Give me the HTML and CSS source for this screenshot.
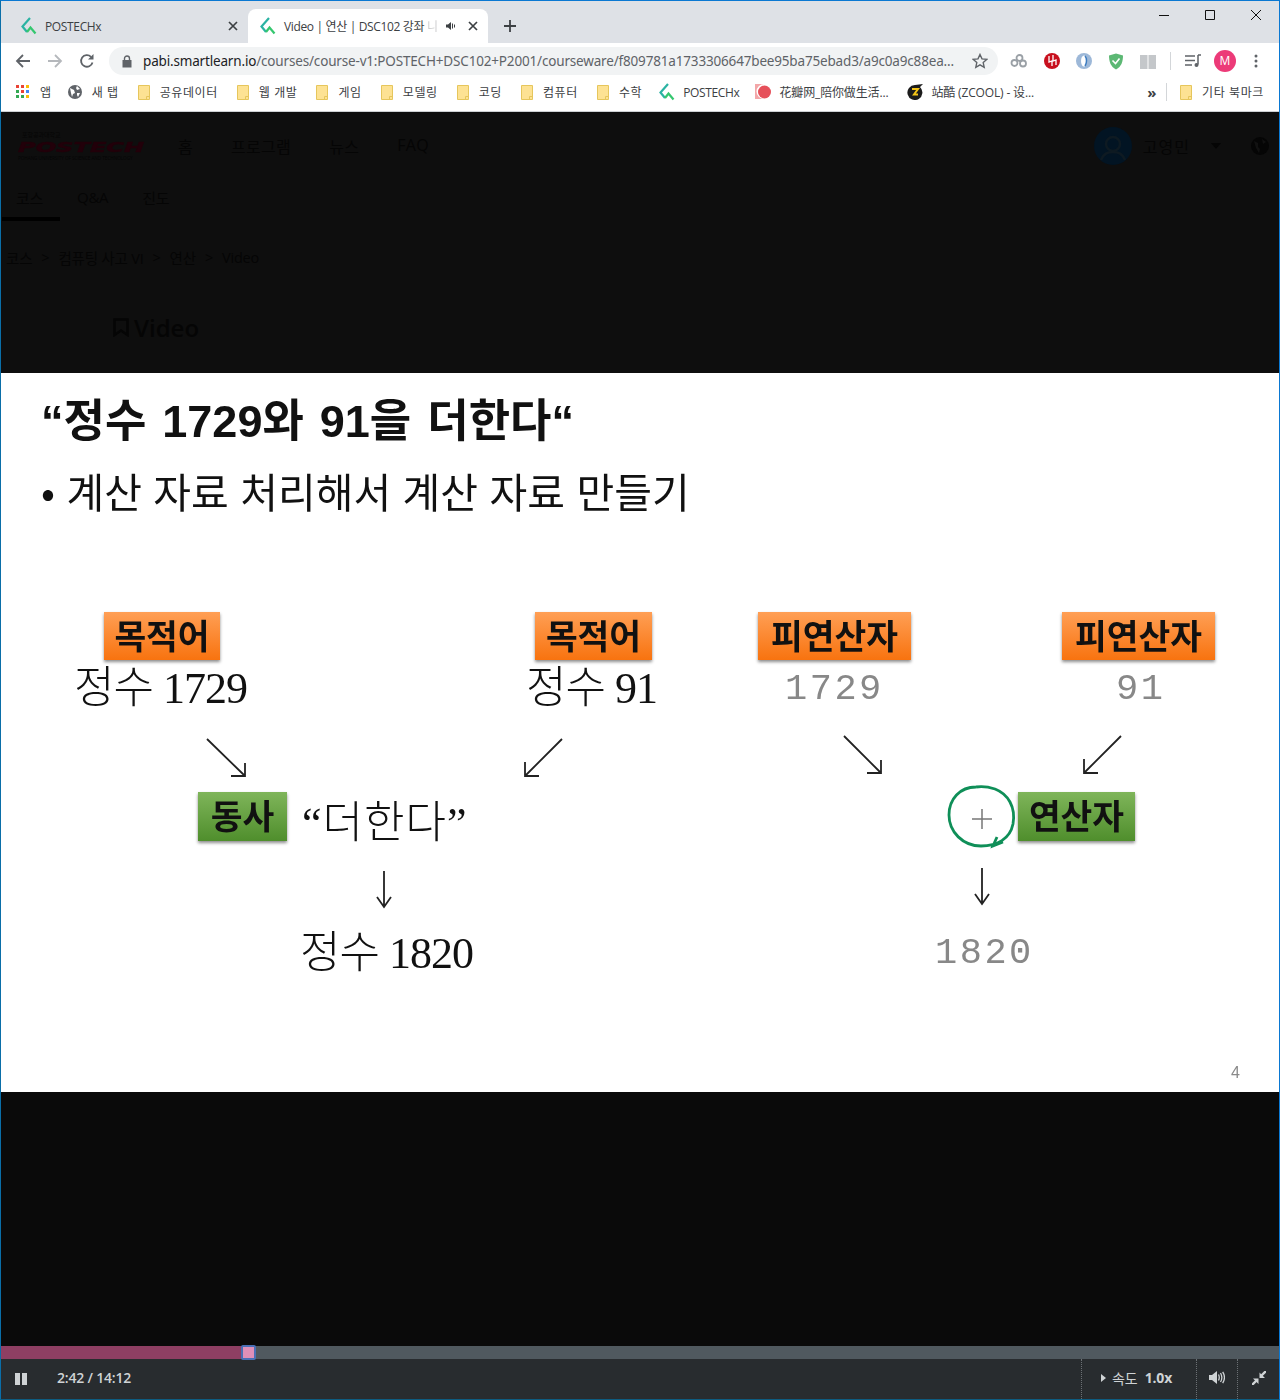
FILE: index.html
```html
<!DOCTYPE html>
<html lang="ko">
<head>
<meta charset="UTF-8">
<title>Video | 연산 | DSC102 강좌</title>
<link rel="stylesheet" href="styles.css">
</head>
<body>
<svg class="defs" width="0" height="0">
	<symbol id="fav" viewBox="0 0 16 18">
		<path d="M9 1 1.5 9.5 6 15" fill="none" stroke="#2bb3a3" stroke-width="2.2"/>
		<path d="M6 15 9.5 10.5 14.5 16.5" fill="none" stroke="#35c76f" stroke-width="2.2"/>
	</symbol>
	<symbol id="folder" viewBox="0 0 12 15">
		<path d="M.5.5h11v14H.5z" fill="#fde293" stroke="#e6c65c"/>
		<path d="M8.5 14.500v-3h3" fill="none" stroke="#e6c65c"/>
	</symbol>
</svg>

<div class="window">
	<div class="tabstrip">
		<div class="tab">
			<svg class="fav" width="16" height="18"><use href="#fav"/></svg>
			<span class="tab-title">POSTECHx</span>
			<svg class="tab-x" width="10" height="10" viewBox="0 0 10 10"><path d="M1 1l8 8M9 1l-8 8" stroke="#3c4043" stroke-width="1.700"/></svg>
		</div>
		<div class="tab tab-on">
			<svg class="fav" width="16" height="18"><use href="#fav"/></svg>
			<span class="tab-title">Video | 연산 | DSC102 강좌 <span class="tab-fade">니</span></span>
			<svg class="tab-snd" width="10" height="10" viewBox="0 0 10 10"><path d="M0 3.500h2L5 1v8L2 6.500H0z" fill="#3c4043"/><path d="M6.500 2.500v5M8.500 3.500v3" stroke="#3c4043"/></svg>
			<svg class="tab-x" width="10" height="10" viewBox="0 0 10 10"><path d="M1 1l8 8M9 1l-8 8" stroke="#3c4043" stroke-width="1.700"/></svg>
		</div>
		<svg class="newtab" width="12" height="12" viewBox="0 0 12 12"><path d="M6 0v12M0 6h12" stroke="#3c4043" stroke-width="1.800"/></svg>
		<div class="winbtns">
			<svg width="10" height="10" viewBox="0 0 10 10"><path d="M0 5.500h10" stroke="#111"/></svg>
			<svg width="10" height="10" viewBox="0 0 10 10"><path d="M.5.5h9v9h-9z" fill="none" stroke="#111"/></svg>
			<svg width="10" height="10" viewBox="0 0 10 10"><path d="M0 0l10 10M10 0L0 10" stroke="#111"/></svg>
		</div>
	</div>

	<div class="toolbar">
		<svg class="nav-ico" width="16" height="16" viewBox="0 0 16 16"><path d="M15 8H2M8 2 2 8l6 6" fill="none" stroke="#5f6368" stroke-width="1.800"/></svg>
		<svg class="nav-ico" width="16" height="16" viewBox="0 0 16 16"><path d="M1 8h13M8 2l6 6-6 6" fill="none" stroke="#b5b8bc" stroke-width="1.800"/></svg>
		<svg class="nav-ico" width="16" height="16" viewBox="0 0 16 16"><path d="M13.500 9.500A5.800 5.800 0 1 1 12 3.800" fill="none" stroke="#5f6368" stroke-width="1.800"/><path d="M14.500 1v5.500H9z" fill="#5f6368"/></svg>
		<div class="omnibox">
			<svg width="10" height="13" viewBox="0 0 10 13"><path d="M2.500 5V3.500a2.500 2.500 0 0 1 5 0V5" fill="none" stroke="#5f6368" stroke-width="1.400"/><path d="M.5 5h9v7.500h-9z" fill="#5f6368"/></svg>
			<span class="url"><b>pabi.smartlearn.io</b>/courses/course-v1:POSTECH+DSC102+P2001/courseware/f809781a1733306647bee95ba75ebad3/a9c0a9c88ea...</span>
			<svg width="16" height="16" viewBox="0 0 16 16"><path d="M8 1.500l2 4.400 4.700.5-3.500 3.200 1 4.700L8 11.900l-4.200 2.400 1-4.700L1.300 6.400 6 5.900z" fill="none" stroke="#5f6368" stroke-width="1.400"/></svg>
		</div>
		<div class="exts">
			<svg width="18" height="16" viewBox="0 0 18 16"><g fill="none" stroke="#9aa0a6" stroke-width="1.800"><circle cx="4.500" cy="10" r="3"/><circle cx="13" cy="10.500" r="3"/><circle cx="9.500" cy="5" r="3"/></g></svg>
			<svg width="16" height="16" viewBox="0 0 16 16"><circle cx="8" cy="8" r="8" fill="#c8101e"/><path d="M5 3v6l3-1v5M9 2v6l3-1v5" fill="none" stroke="#fff" stroke-width="1.300"/></svg>
			<svg width="16" height="16" viewBox="0 0 16 16"><circle cx="8" cy="8" r="8" fill="#9db8d8"/><ellipse cx="8" cy="8" rx="3" ry="5.500" fill="#fff"/><path d="M9 3c2 2 2 7 0 10" fill="none" stroke="#3d7cc0" stroke-width="1.500"/></svg>
			<svg width="16" height="17" viewBox="0 0 16 17"><path d="M1 2.500 8 .5l7 2c0 6-1.500 11-7 14-5.500-3-7-8-7-14z" fill="#5cb874"/><path d="M4.500 7.500 7.500 10.500 11.500 5.500" fill="none" stroke="#fff" stroke-width="1.600"/></svg>
			<svg width="16" height="15" viewBox="0 0 16 15"><path d="M0 1h7.500v14H0zM8.500 1H16v14H8.500z" fill="#c4c7ca"/></svg>
			<i class="ext-sep"></i>
			<svg class="ext-list" width="16" height="14" viewBox="0 0 16 14"><path d="M0 2h10M0 6.500h10M0 11h7" stroke="#5f6368" stroke-width="1.500"/><path d="M13 1h3M13 1v9.500" stroke="#5f6368" stroke-width="1.500" fill="none"/><circle cx="11.500" cy="11" r="2" fill="#5f6368"/></svg>
			<span class="avatar">M</span>
			<svg width="4" height="14" viewBox="0 0 4 14"><circle cx="2" cy="2" r="1.500" fill="#5f6368"/><circle cx="2" cy="7" r="1.500" fill="#5f6368"/><circle cx="2" cy="12" r="1.500" fill="#5f6368"/></svg>
		</div>
	</div>

	<div class="bookmarks">
		<span class="bm bm-apps">
			<svg width="14" height="14" viewBox="0 0 14 14">
				<g fill="#ea4335"><path d="M0 0h3v3H0zM5 0h3v3H5z"/></g><path d="M10 0h3v3h-3z" fill="#fbbc04"/>
				<path d="M0 5h3v3H0z" fill="#34a853"/><path d="M5 5h3v3H5z" fill="#ea4335"/><path d="M10 5h3v3h-3z" fill="#4285f4"/>
				<path d="M0 10h3v3H0zM5 10h3v3H5z" fill="#34a853"/><path d="M10 10h3v3h-3z" fill="#fbbc04"/>
			</svg>앱</span>
		<span class="bm">
			<svg width="14" height="14" viewBox="0 0 14 14"><circle cx="7" cy="7" r="7" fill="#5f6368"/><path d="M2 3l4 2 1 3-2 1-1 3-1-4zM9 1l3 3-3 1-1-2zM9 8l3 0-2 4-1-2z" fill="#fff"/></svg>새 탭</span>
		<span class="bm"><svg class="fd" width="12" height="15"><use href="#folder"/></svg>공유데이터</span>
		<span class="bm"><svg class="fd" width="12" height="15"><use href="#folder"/></svg>웹 개발</span>
		<span class="bm"><svg class="fd" width="12" height="15"><use href="#folder"/></svg>게임</span>
		<span class="bm"><svg class="fd" width="12" height="15"><use href="#folder"/></svg>모델링</span>
		<span class="bm"><svg class="fd" width="12" height="15"><use href="#folder"/></svg>코딩</span>
		<span class="bm"><svg class="fd" width="12" height="15"><use href="#folder"/></svg>컴퓨터</span>
		<span class="bm"><svg class="fd" width="12" height="15"><use href="#folder"/></svg>수학</span>
		<span class="bm bm-latin"><svg width="16" height="18"><use href="#fav"/></svg>POSTECHx</span>
		<span class="bm bm-latin2 bm-hua"><svg width="16" height="16" viewBox="0 0 16 16"><path d="M0 0h9a7.500 7.500 0 0 0 0 15H0z" fill="#f3a6a8"/><circle cx="9.500" cy="8" r="6.500" fill="#e6505a"/></svg>花瓣网_陪你做生活...</span>
		<span class="bm bm-latin2"><svg width="16" height="16" viewBox="0 0 16 16"><path d="M16 0 13 3A7.500 7.500 0 1 1 8 1z" fill="#1c1c1c"/><path d="M5 5h6L7 10.500h4" fill="none" stroke="#f5c518" stroke-width="2"/></svg>站酷 (ZCOOL) - 设...</span>
		<span class="bm-more">»</span>
		<i class="bm-sep"></i>
		<span class="bm"><svg class="fd" width="12" height="15"><use href="#folder"/></svg>기타 북마크</span>
	</div>

	<div class="page">
		<div class="behind">
			<div class="site-head">
				<div class="logo">
					<span class="logo-top">포항공과대학교</span>
					<span class="logo-main">POSTECH</span>
					<span class="logo-sub">POHANG UNIVERSITY OF SCIENCE AND TECHNOLOGY</span>
				</div>
				<nav class="site-nav"><span>홈</span><span>프로그램</span><span>뉴스</span><span>FAQ</span></nav>
				<div class="user">
					<svg width="38" height="38" viewBox="0 0 38 38"><circle cx="19" cy="19" r="19" fill="#021423"/><circle cx="19" cy="17" r="7" fill="none" stroke="#0e1a22" stroke-width="2.500"/><path d="M7 33c3-7 7-8 12-8s9 1 12 8" fill="none" stroke="#0e1a22" stroke-width="2.500"/></svg>
					<span class="user-name">고영민</span>
					<i class="user-caret"></i>
					<svg class="user-globe" width="18" height="18" viewBox="0 0 18 18"><circle cx="9" cy="9" r="9" fill="#050505"/><path d="M3 4l4 2v4l2 2-1 4-3-5zM11 2l4 3-3 2z" fill="#111"/></svg>
				</div>
			</div>
			<div class="course-tabs"><span class="ct-on">코스</span><span>Q&amp;A</span><span>진도</span></div>
			<div class="crumbs"><span>코스</span><i>&gt;</i><span>컴퓨팅 사고 VI</span><i>&gt;</i><span>연산</span><i>&gt;</i><span>Video</span></div>
			<div class="unit-title">
				<svg width="16" height="19" viewBox="0 0 16 19"><path d="M1.500 1.500h13v15.500L8 12.500 1.500 17z" fill="none" stroke="#050505" stroke-width="2.500"/></svg>
				<span>Video</span>
			</div>
		</div>

		<div class="slide">
			<h1 class="s-title">“정수 1729와 91을 더한다“</h1>
			<p class="s-bullet">• 계산 자료 처리해서 계산 자료 만들기</p>

			<span class="tag orange t1">목적어</span>
			<span class="tag orange t2">목적어</span>
			<span class="tag orange t3">피연산자</span>
			<span class="tag orange t4">피연산자</span>
			<span class="tag green t5">동사</span>
			<span class="tag green t6">연산자</span>

			<span class="serif v1">정수 1729</span>
			<span class="serif v2">정수 91</span>
			<span class="serif v3">“더한다”</span>
			<span class="serif v4">정수 1820</span>

			<span class="mono m1">1729</span>
			<span class="mono m2">91</span>
			<span class="mono m3">1820</span>

			<svg class="marks" width="1278" height="719" viewBox="0 0 1278 719">
				<g fill="none" stroke="#222" stroke-width="1.800">
					<path d="M206 366l38 37M244 390v13h-14"/>
					<path d="M561 366l-37 37M524 389v14h14"/>
					<path d="M843 363l37 37M880 387v13h-14"/>
					<path d="M1120 363l-37 37M1083 386v14h14"/>
					<path d="M383 498v36M376 524l7 10 7-10"/>
					<path d="M981 495v36M974 521l7 10 7-10"/>
				</g>
				<path d="M971 446h20M981 436v20" stroke="#777" stroke-width="1.500"/>
				<path d="M975 414c-16 0-27 12-27 28 0 17 14 31 32 31 16 0 29-7 32-22 3-17-5-30-18-35-6-2-13-3-19-2M996 464l-4 9 10-4" fill="none" stroke="#0f8f58" stroke-width="2.800"/>
			</svg>

			<span class="pageno">4</span>
		</div>

		<div class="letterbox"></div>

		<div class="progress">
			<div class="progress-fill"></div>
			<i class="progress-knob"></i>
		</div>

		<div class="controls">
			<span class="pause"><i></i><i></i></span>
			<span class="time">2:42 / 14:12</span>
			<div class="ctl ctl-speed">
				<i class="speed-arrow"></i>
				<span class="speed-lbl">속도</span>
				<b class="speed-val">1.0x</b>
			</div>
			<div class="ctl ctl-vol">
				<svg width="16" height="13" viewBox="0 0 16 13"><path d="M0 4h3l5-4v13L3 9H0z" fill="#cfd3d5"/><path d="M9.500 3.500c1 2 1 4 0 6M11.500 2c1.800 3 1.800 6 0 9M13.700 .8c2.300 3.700 2.300 7.700 0 11.400" fill="none" stroke="#cfd3d5" stroke-width="1.300"/></svg>
			</div>
			<div class="ctl ctl-full">
				<svg width="14" height="14" viewBox="0 0 14 14"><path d="M14 0 9 5M0 14l5-5" stroke="#cfd3d5" stroke-width="2.400"/><path d="M7.500 1.500v5.500H13zM1 7.500h5.500V13z" fill="#cfd3d5"/></svg>
			</div>
		</div>
	</div>
</div>
</body>
</html>
```
FILE: styles.css
```css
*{
	margin:0; padding:0;
	box-sizing:border-box;
}

html,body{
	height:100%;
}

body{
	font-family:"Open Sans","Noto Sans CJK KR",sans-serif;
	overflow:hidden;
}

.defs{
	position:absolute;
}

.window{
	height:1400px;
	display:flex;
	flex-direction:column;
	border-top:1px solid #0a78d2;
	border-left:1px solid #0a6ea8;
	border-right:1px solid #0a78d2;
	border-bottom:1px solid #0d5c80;
	background:#fff;
}

/* tabs */
.tabstrip{
	height:42px;
	flex-shrink:0;
	background:#dee1e6;
	display:flex;
	align-items:flex-end;
	padding-left:8px;
	color:#3c4043;
	font-size:12px;
}

.tab{
	width:239px;
	height:34px;
	display:flex;
	align-items:center;
	padding:0 10px 0 12px;
}

.tab-on{
	width:240px;
	padding-right:12px;
	background:#fff;
	border-radius:8px 8px 0 0;
}

.fav{
	margin-right:8px;
	flex-shrink:0;
}

.tab-title{
	flex-grow:1;
	white-space:nowrap;
	letter-spacing:-.35px;
}

.tab-fade{
	opacity:.25;
}

.tab-snd{
	margin:0 12px 0 8px;
	flex-shrink:0;
}

.tab-x{
	flex-shrink:0;
}

.newtab{
	margin:0 0 11px 16px;
}

.winbtns{
	margin-left:auto;
	align-self:flex-start;
	display:flex;
	gap:36px;
	padding:9px 18px 0 0;
}

/* address bar */
.toolbar{
	height:36px;
	flex-shrink:0;
	display:flex;
	align-items:center;
	padding-left:14px;
	gap:16px;
}

.omnibox{
	width:889px;
	height:28px;
	margin-left:-2px;
	background:#f1f3f4;
	border-radius:14px;
	display:flex;
	align-items:center;
	padding:0 10px 0 13px;
	color:#5f6368;
}

.url{
	flex-grow:1;
	margin-left:11px;
	font-family:"Noto Sans",sans-serif;
	font-size:13.500px;
	white-space:nowrap;
	overflow:hidden;
	letter-spacing:-.17px;
}

.url b{
	font-weight:400;
	color:#202124;
}

.exts{
	display:flex;
	align-items:center;
	margin-left:-4px;
	gap:16px;
}

.ext-sep{
	width:1px;
	height:18px;
	background:#d3d6d9;
	margin:0 -1px 0 -2px;
}

.ext-list{
	margin-left:-1px;
}

.avatar{
	width:22px;
	height:22px;
	border-radius:50%;
	background:#ec3a78;
	color:#fff;
	font-size:12px;
	line-height:22px;
	text-align:center;
	margin:0 2px 0 -3px;
}

/* bookmarks */
.bookmarks{
	height:33px;
	flex-shrink:0;
	display:flex;
	align-items:center;
	gap:19px;
	padding:0 0 6px 15px;
	font-size:12px;
	color:#3c4043;
	letter-spacing:.6px;
	border-bottom:1px solid #cdd0d3;
	white-space:nowrap;
}

.bm{
	display:flex;
	align-items:center;
	gap:10px;
}

.bm-apps{
	margin-right:-3px;
}

.bm-latin{
	letter-spacing:-.35px;
	gap:8px;
	margin-left:-2px;
}

.bm-latin2{
	letter-spacing:-.15px;
	gap:8px;
}

.bm-hua{
	margin-left:-3px;
}

.bm-more{
	margin:0 -4px 0 auto;
	font-size:15px;
	font-weight:700;
}

.bm-sep{
	width:1px;
	height:18px;
	background:#d3d6d9;
	margin:0 -6px;
}

.bm:last-child{
	margin-right:15px;
}

/* page */
.page{
	flex-grow:1;
	min-height:0;
	display:flex;
	flex-direction:column;
	background:#0a0a0a;
}

.behind{
	height:261px;
	flex-shrink:0;
	background:#0e0e0e;
	color:#050505;
	font-size:16px;
}

.site-head{
	height:68px;
	display:flex;
	align-items:center;
	padding:0 10px 0 17px;
}

.logo{
	width:127px;
	display:flex;
	flex-direction:column;
	line-height:1;
}

.logo-top{
	font-size:6px;
	padding-left:4px;
	margin-bottom:2px;
}

.logo-main{
	font-family:"DejaVu Sans",sans-serif;
	font-style:italic;
	font-weight:700;
	font-size:14px;
	color:#22000a;
	-webkit-text-stroke:.5px #22000a;
	transform:scaleX(1.72);
	transform-origin:left;
}

.logo-sub{
	font-size:4.600px;
	white-space:nowrap;
	padding-top:2px;
}

.site-nav{
	display:flex;
	gap:38px;
	margin-left:33px;
	letter-spacing:.3px;
}

.user{
	margin-left:auto;
	display:flex;
	align-items:center;
}

.user-name{
	margin-left:11px;
	letter-spacing:1px;
}

.user-caret{
	margin-left:21px;
	border:5px solid transparent;
	border-top:6px solid #050505;
	border-bottom:0;
}

.user-globe{
	margin-left:30px;
}

.course-tabs{
	height:45px;
	display:flex;
	gap:34px;
	padding:0 0 11px 15px;
	align-items:center;
	font-size:15px;
	letter-spacing:-.3px;
}

.ct-on{
	position:relative;
}

.ct-on:after{
	content:"";
	position:absolute;
	left:-14px;
	top:30px;
	width:58px;
	height:4px;
	background:#000;
}

.crumbs{
	display:flex;
	gap:9px;
	align-items:center;
	height:64px;
	padding-left:5px;
	font-size:14.500px;
	letter-spacing:-.2px;
}

.crumbs i{
	font-style:normal;
}

.unit-title{
	display:flex;
	align-items:center;
	gap:5px;
	padding:22px 0 0 112px;
	font-size:24px;
	font-weight:600;
}

/* slide is a free canvas, nodes sit where the lecture drew them */
.slide{
	position:relative;
	height:719px;
	flex-shrink:0;
	background:#fff;
	color:#111;
	overflow:hidden;
	font-family:"Noto Sans CJK KR",sans-serif;
	filter:blur(.3px);
}

.s-title{
	position:absolute;
	left:40px;
	top:16px;
	font-family:"Liberation Sans","Noto Sans CJK KR",sans-serif;
	font-size:45px;
	line-height:66px;
	font-weight:700;
	word-spacing:3.500px;
	white-space:nowrap;
}

.s-bullet{
	position:absolute;
	left:40px;
	top:84px;
	font-size:41px;
	line-height:66px;
	white-space:nowrap;
}

.tag{
	position:absolute;
	height:48px;
	display:flex;
	align-items:center;
	justify-content:center;
	padding-bottom:5px;
	font-size:34.500px;
	font-weight:700;
	color:#111;
	box-shadow:0 2px 3px rgba(0,0,0,.45);
}

.orange{
	background:linear-gradient(#ff9f55,#f8730f);
}

.green{
	background:linear-gradient(#7fb55a,#4f8e2c);
	height:49px;
}

.t1{ left:103px; top:239px; width:116px; }
.t2{ left:534px; top:239px; width:117px; }
.t3{ left:757px; top:239px; width:153px; }
.t4{ left:1061px; top:239px; width:153px; }
.t5{ left:197px; top:419px; width:89px; }
.t6{ left:1017px; top:419px; width:117px; }

.serif{
	position:absolute;
	font-family:"Liberation Serif","Noto Sans CJK KR",serif;
	font-size:44px;
	line-height:56px;
	letter-spacing:-1px;
	white-space:nowrap;
	font-weight:300;
}

.v1{ left:73px; top:288px; }
.v2{ left:525px; top:288px; }
.v3{ left:301px; top:423px; letter-spacing:1px; }
.v4{ left:299px; top:553px; }

.mono{
	position:absolute;
	font-family:"Liberation Mono",monospace;
	font-size:37px;
	line-height:44px;
	letter-spacing:2.500px;
	color:#888;
	white-space:nowrap;
}

.m1{ left:784px; top:294px; }
.m2{ left:1115px; top:294px; }
.m3{ left:934px; top:558px; }

.marks{
	position:absolute;
	left:0;
	top:0;
}

.pageno{
	position:absolute;
	left:1230px;
	top:691px;
	font-family:"Liberation Sans",sans-serif;
	font-size:16px;
	color:#8a8a8a;
}

.letterbox{
	flex-grow:1;
	background:#0a0a0a;
}

/* player */
.progress{
	position:relative;
	height:13px;
	flex-shrink:0;
	background:#50595f;
}

.progress-fill{
	width:241px;
	height:100%;
	background:#8e3f63;
}

.progress-knob{
	position:absolute;
	left:240px;
	top:-1px;
	width:15px;
	height:15px;
	background:#e08fb8;
	border:2px solid #4a6fb5;
	border-radius:2px;
}

.controls{
	height:40px;
	flex-shrink:0;
	display:flex;
	align-items:center;
	background:#282c2f;
	color:#cfd3d5;
}

.pause{
	display:flex;
	gap:2px;
	margin:0 0 0 14px;
}

.pause i{
	width:5px;
	height:12px;
	background:#cfd3d5;
}

.time{
	margin:-4px 0 0 30px;
	font-size:14px;
	font-weight:600;
	letter-spacing:-.2px;
}

.ctl{
	height:100%;
	display:flex;
	align-items:center;
	justify-content:center;
	padding-bottom:3px;
	border-left:1px dotted #6c7175;
}

.ctl-speed{
	width:115px;
	margin-left:auto;
	padding-right:5px;
	font-size:14px;
}

.speed-arrow{
	border:4px solid transparent;
	border-left:5px solid #cfd3d5;
	border-right:0;
	margin-right:6px;
}

.speed-lbl{
	margin-right:7px;
}

.speed-val{
	font-weight:700;
	letter-spacing:-.2px;
}

.ctl-vol{
	width:41px;
}

.ctl-full{
	width:42px;
}
```
